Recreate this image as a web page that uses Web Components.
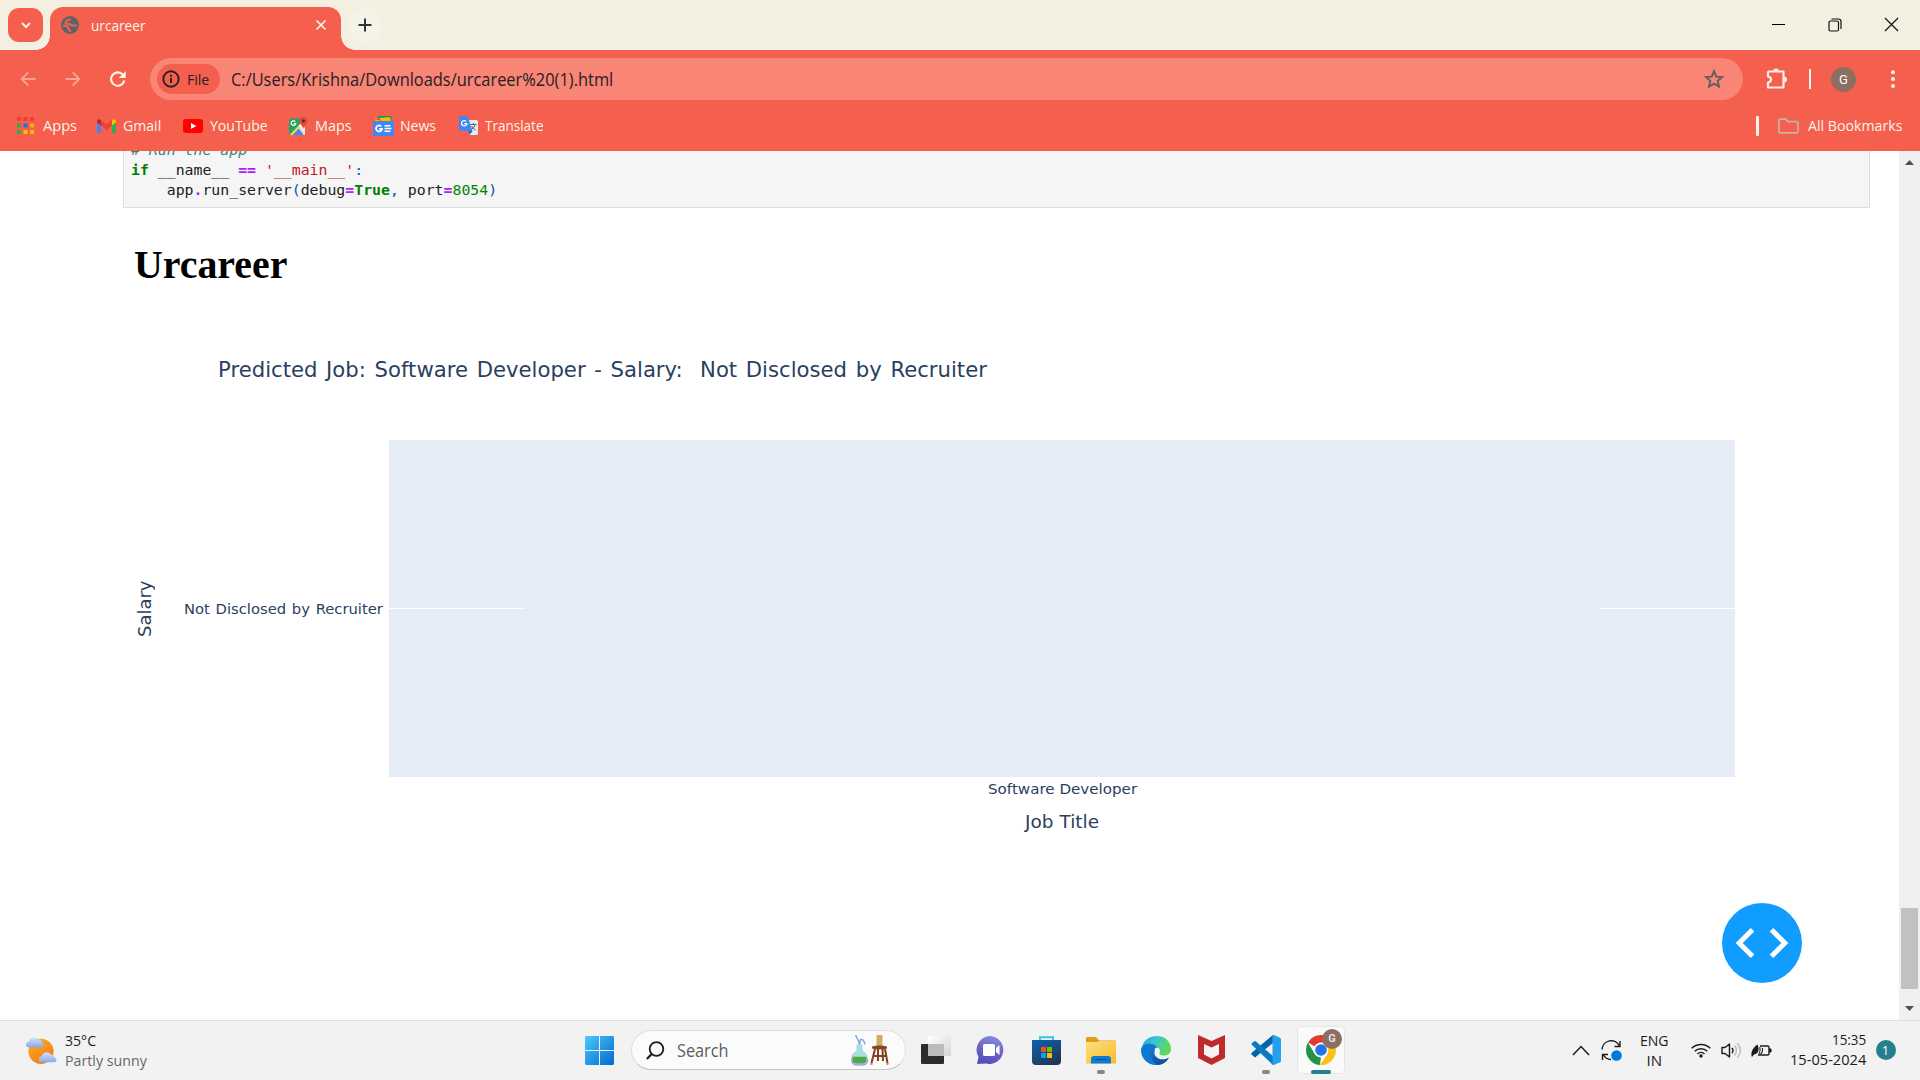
<!DOCTYPE html>
<html lang="en">
<head>
<meta charset="utf-8">
<title>urcareer</title>
<style>
html,body{margin:0;height:100%;overflow:hidden}
body{font-family:"Open Sans","Noto Sans",sans-serif;background:#fff}
</style>
</head>
<body>
<desktop-screen></desktop-screen>
<script>
const ICONS = {
  chevronDown:[12,12,'<path d="M2 4l4 4 4-4" fill="none" stroke="#fbf5e6" stroke-width="2"/>'],
  globe:[18,18,'<circle cx="9" cy="9" r="9" fill="#5f6368"/><path d="M9.500 3C7 4 5 5 4.500 6.500c0 1.500 1.500 1.500 3 1.500 2.500 0 2.500 1.500 4.500 1.500h4M2 9.500c2 .3 4 .3 5 1.300 1.200 1.200-.2 1.700.8 2.500 1 .7 1.500.7 1.500 2.700" fill="none" stroke="#f55f4e" stroke-width="2"/>'],
  x:[12,12,'<path d="M1.500 1.500l9 9M10.500 1.500l-9 9" stroke="#fbf5e6" stroke-width="1.700"/>'],
  plus:[14,14,'<path d="M7 .5v13M.5 7h13" stroke="#2f3640" stroke-width="2"/>'],
  back:[16,16,'<path d="M15.500 8H2M8.300 1.300L1.600 8l6.700 6.700" fill="none" stroke="#f9a497" stroke-width="1.800"/>'],
  fwd:[16,16,'<path d="M.5 8H14M7.700 1.300L14.400 8l-6.700 6.700" fill="none" stroke="#f9a497" stroke-width="1.800"/>'],
  reload:[18,18,'<path d="M15.300 10.500a6.700 6.700 0 1 1-1.600-6" fill="none" stroke="#fff3e6" stroke-width="2.100"/><path d="M16.800 1v7h-7z" fill="#fff3e6"/>'],
  info:[18,18,'<circle cx="9" cy="9" r="7.700" fill="none" stroke="#272024" stroke-width="1.900"/><path d="M9 8v5" stroke="#272024" stroke-width="2"/><path d="M9 4.700v2" stroke="#272024" stroke-width="2"/>'],
  star:[20,20,'<path d="M10 2.200l2.300 5.400 5.800.5-4.400 3.800 1.300 5.700-5-3-5 3 1.300-5.700-4.400-3.800 5.800-.5z" fill="none" stroke="#5f5d60" stroke-width="1.900"/>'],
  puzzle:[22,22,'<path d="M3 3.500h14.500v16H2v-5q3-.5 3-3T2 8.500V4.500q0-1 1-1z" fill="none" stroke="#fbeee6" stroke-width="2.200" stroke-linejoin="round"/><path d="M7 3.500a3 3 0 0 1 6 0zM18 8.500a3 3 0 0 1 0 6z" fill="#fbeee6"/>'],
  dots:[4,18,'<g fill="#fff3e6"><circle cx="2" cy="2.200" r="2"/><circle cx="2" cy="9" r="2"/><circle cx="2" cy="15.900" r="2"/></g>'],
  folderLine:[21,16,'<path d="M1 13.500V2.500q0-1.300 1.300-1.300H8l2 2.500h8.700q1.300 0 1.300 1.300v8.500q0 1.300-1.300 1.300H2.300Q1 14.800 1 13.500z" fill="none" stroke="#c5b5a6" stroke-width="1.700"/>'],
  apps:[17,17,'<g><path d="M0 0h4v4H0zM6.500 0h4v4h-4zM13 0h4v4h-4z" fill="#f43b30"/><path d="M0 6.500h4v4H0z" fill="#34a853"/><path d="M6.500 6.500h4v4h-4z" fill="#1a73e8"/><path d="M13 6.500h4v4h-4z" fill="#fbab05"/><path d="M0 13h4v4H0z" fill="#34a853"/><path d="M6.500 13h4v4h-4zM13 13h4v4h-4z" fill="#fbbc04"/></g>'],
  gmail:[19,14,'<path d="M0 2v10.500Q0 14 1.500 14H4V4z" fill="#4285f4"/><path d="M19 2v10.500Q19 14 17.500 14H15V4z" fill="#34a853"/><path d="M4 1l5.500 4.300L15 1v5.500L9.500 11 4 6.500z" fill="#ea4335"/><path d="M0 2.500Q0 .2 2 .2L4 1v5.500L0 3.500z" fill="#c5221f"/><path d="M19 2.500Q19 .2 17 .2L15 1v5.500l4-3z" fill="#fbbc04"/>'],
  youtube:[20,14,'<rect width="20" height="14" rx="3" fill="#f00"/><path d="M8 4l5.300 3L8 10z" fill="#fff"/>'],
  maps:[20,20,'<path d="M0 4q0-1.500 1.500-1.500H14L9.500 10 1.500 19Q0 19 0 17.500z" fill="#23a566"/><path d="M9.500 10l6.500 9h-1.500L9 12z" fill="#e8eaed"/><path d="M2 19l7-7.500 5.500 7.500z" fill="#4285f4"/><path d="M1 18.500L12 7l1.500 2L3 19.500z" fill="#fbd04b"/><path d="M9.500 10L12 7.500l4 4.500v7z" fill="#f1f1f1"/><path d="M14 13C13.500 9 10.500 8 10.500 5a4 4 0 0 1 8 0C18.500 8 15 9 14 13z" fill="#dd4b3e"/><circle cx="14.500" cy="5" r="1.400" fill="#811411"/><path d="M6.300 5.600A2.300 2.300 0 1 0 6.800 7.500H4.700" fill="none" stroke="#fff" stroke-width="1.200"/>'],
  news:[21,20,'<path d="M5 0h13.500v8H5z" fill="#0c9d58"/><path d="M2 2.500l15-1.500L18.500 8 3 10z" fill="#fbbc04"/><path d="M1.500 3l4-1 3.500 3z" fill="#ea4335"/><rect y="5" width="21" height="15" rx="1" fill="#4285f4"/><path d="M8.300 10.500A3 3 0 1 0 9 12.800H6.200" fill="none" stroke="#fff" stroke-width="1.800"/><path d="M11.500 9.700h6M11.500 12.500h7M11.500 15.300h6" stroke="#fff" stroke-width="1.600"/>'],
  translate:[19,19,'<path d="M8 4h9.500Q19 4 19 5.500v12q0 1.500-1.500 1.500H11z" fill="#e8eaed"/><path d="M1.500 0h7l5 15H1.500Q0 15 0 13.500v-12Q0 0 1.500 0z" fill="#4285f4"/><path d="M9 15h4.500L11 18.500z" fill="#1967d2"/><path d="M7.200 5.400A2.700 2.700 0 1 0 7.900 7.600H5.400" fill="none" stroke="#fff" stroke-width="1.300"/><path d="M11.500 8.500h6M14.300 7v1.500M16.300 8.500q-.8 3.500-4 5M12.700 10q1.500 3 4 4" fill="none" stroke="#5f6368" stroke-width="1"/>'],
  min:[13,13,'<path d="M0 6.500h13" stroke="#000" stroke-width="1"/>'],
  restore:[14,14,'<rect x="1" y="3" width="9.500" height="10" rx="1.500" fill="none" stroke="#111" stroke-width="1.200"/><path d="M3.500 1h7Q13 1 13 3.500V11" fill="none" stroke="#111" stroke-width="1.200"/>'],
  close:[13,13,'<path d="M0 0l13 13M13 0L0 13" stroke="#111" stroke-width="1.200"/>'],
  up:[9,5,'<path d="M0 5l4.500-5L9 5z" fill="#505050"/>'],
  down:[9,5,'<path d="M0 0l4.500 5L9 0z" fill="#505050"/>'],
  code:[80,80,'<circle cx="40" cy="40" r="40" fill="#119dff"/><path d="M30.500 26.700L17.200 40l13.300 13.300M49.500 26.700L62.800 40 49.500 53.300" fill="none" stroke="#fff" stroke-width="5"/>'],
  weather:[30,29,'<defs><linearGradient id="s" x2=".6" y2="1"><stop stop-color="#f4b32a"/><stop offset="1" stop-color="#f67b18"/></linearGradient><linearGradient id="c" x2="0" y2="1"><stop stop-color="#d4e3fb"/><stop offset="1" stop-color="#85a9e8"/></linearGradient></defs><circle cx="15" cy="15.300" r="12.600" fill="url(#s)"/><path d="M3 11.300A2.900 2.900 0 0 1 3 5.500 5 5 0 0 1 12 3.500a3.800 3.800 0 0 1 4 3.300 2.300 2.300 0 0 1 0 4.500z" fill="url(#c)"/><path d="M3 11.300A2.900 2.900 0 0 1 3 5.500 5 5 0 0 1 12 3.500a3.800 3.800 0 0 1 4 3.300 2.300 2.300 0 0 1 0 4.500z" transform="translate(12.700 15)" fill="url(#c)"/>'],
  win:[29,29,'<defs><linearGradient id="w" gradientUnits="userSpaceOnUse" x1="0" y1="0" x2="29" y2="29"><stop stop-color="#4cc9fb"/><stop offset="1" stop-color="#0069cf"/></linearGradient></defs><path d="M1 0h13v14H0V1zM15 0h13l1 1v13H15zM0 15h14v14H1l-1-1zM15 15h14v13l-1 1H15z" fill="url(#w)"/>'],
  search:[18,19,'<circle cx="10.500" cy="8" r="6.800" fill="none" stroke="#1d1d1d" stroke-width="1.800"/><path d="M5.700 13L.9 18" stroke="#1d1d1d" stroke-width="2.300"/>'],
  decor:[38,32,'<path d="M8.500 16L8 8 4.500 1M8.500 12l1-6.500q3-1 4.500 5" fill="none" stroke="#78a4e8" stroke-width="1.400"/><path d="M5.500 10.500h6v6q5.500 3 5.500 8.500 0 6-5 6H5q-5 0-5-6 0-5.500 5.500-8.500z" fill="#a9dce9"/><path d="M1.500 22.500h14q.8 7-3.500 7H5q-4.500 0-3.500-7z" fill="#4fa64b"/><path d="M1.500 22h14" stroke="#b9e8a4"/><path d="M.7 25q0 6 5 6h6q5 0 5-6" fill="none" stroke="#9aa5ee" stroke-width="1.300"/><path d="M25.500 1h6v11.500h-6z" fill="#d0ab62"/><path d="M21 12.500q7.500-2 15 0v2q-7.500 2-15 0z" fill="#8a421f"/><path d="M24 15l-3.500 14M27 15v12M31.500 15l.5 12M34 15l2.500 14M22.500 22h13" fill="none" stroke="#85411f" stroke-width="2"/><path d="M19.500 30h2M35.500 30h2" stroke="#b4624f" stroke-width="1.600"/>'],
  taskview:[30,29,'<defs><linearGradient id="t" x2="1" y2="1"><stop stop-color="#fff"/><stop offset="1" stop-color="#d4d4d4"/></linearGradient></defs><rect y="8" width="23" height="20" rx="1" fill="#2c2c2c"/><rect x="7" width="23" height="20" rx="1" fill="url(#t)"/><path d="M7 8h16v12H8q-1 0-1-1z" fill="#bbb"/>'],
  chat:[30,29,'<defs><linearGradient id="m" x1=".7" y1="0" x2=".4" y2="1"><stop stop-color="#7f8fe6"/><stop offset=".45" stop-color="#7468c2"/><stop offset="1" stop-color="#524cc0"/></linearGradient></defs><path d="M15 0a14 14 0 1 1-5 27.500L1 28l1.500-7A14 14 0 0 1 15 0z" fill="url(#m)"/><rect x="7" y="8" width="12" height="12" rx="1.500" fill="#fff"/><path d="M20 12l3.500-3v10L20 16z" fill="#fff"/>'],
  store:[29,29,'<defs><linearGradient id="b" x2=".6" y2="1"><stop stop-color="#0864ae"/><stop offset="1" stop-color="#243657"/></linearGradient></defs><path d="M8 6V1.200h13V6" fill="none" stroke="#36c4f4" stroke-width="2"/><path d="M0 4h29v21q0 4-4 4H4q-4 0-4-4z" fill="url(#b)"/><path d="M9 11h5v5H9z" fill="#f25022"/><path d="M15 11h5v5h-5z" fill="#7fba00"/><path d="M9 17h5v5H9z" fill="#00a4ef"/><path d="M15 17h5v5h-5z" fill="#ffb900"/>'],
  explorer:[30,27,'<defs><linearGradient id="e" x2="1" y2="1"><stop stop-color="#ffe083"/><stop offset="1" stop-color="#f7bb27"/></linearGradient></defs><path d="M0 1q0-1 1-1h9l3 3.500h16q1 0 1 1V9H0z" fill="#dca016"/><path d="M0 5h11l3-1h16v22.500H0z" fill="url(#e)"/><path d="M5 26.500V22q0-3 3-3h14q3 0 3 3v4.500z" fill="#0f7bd1"/><path d="M9 22.500h12" stroke="#084f8d"/>'],
  edge:[30,30,'<defs><linearGradient id="g" x2="1" y2=".4"><stop stop-color="#1b9fe0"/><stop offset=".45" stop-color="#36c5d8"/><stop offset="1" stop-color="#61d957"/></linearGradient><linearGradient id="h" x2=".5" y2="1"><stop stop-color="#1479cf"/><stop offset="1" stop-color="#0c4f9a"/></linearGradient></defs><path d="M1 13C2-1 27-5 30 13c.4 6-4 8-8 7.500-4-.4-4-2-3-4 .5-4-5-6-9-5C4 11 1 16 1 16z" fill="url(#g)"/><path d="M0 15C0 8 13 6 17 13c-5-2-8 9 1 12 4 1.500 8 0 10-2-4 6-9 7-13 7C6 30 0 23 0 15z" fill="#0d79d3"/><path d="M12 12c-4 2-4 12 4 18 6 0 9-3 12-7.500-9 5-17-1-14-8z" fill="url(#h)"/>'],
  mcafee:[27,30,'<path d="M0 0l13.500 6L27 0v23l-13.500 7L0 23z" fill="#bf2b2d"/><path d="M6 9l7.500 3.500L21 9v10.500l-7.500 4-7.500-4z" fill="#f4f2f2"/>'],
  vscode:[30,30,'<path d="M22 0v8L4 22.500 1 20q-1.500-1 0-2.500z" fill="#0065a9"/><path d="M1 10q-1-1 0-2l2-1.500q1-.8 2 0L22 21v9z" fill="#087bc4"/><path d="M21.500.3L23 0l6 2.700q1 .5 1 1.500v21.500q0 1-1 1.500L23 30l-1.500-.5z" fill="#25a0ee"/>'],
  chrome:[30,30,'<circle cx="15" cy="15" r="15" fill="#fff"/><path d="M15 15L2 7.500A15 15 0 0 1 28 7.500z" fill="#e33b2e"/><path d="M2 7.500L8.700 19 15 22l-1 8A15 15 0 0 1 2 7.500z" fill="#229342"/><path d="M15 7.500h13A15 15 0 0 1 14 30l7.500-11z" fill="#fbc116"/><circle cx="15" cy="15" r="7.400" fill="#fff"/><circle cx="15" cy="15" r="5.800" fill="#2374e8"/>'],
  caret:[18,11,'<path d="M1 10l8-8.500 8 8.500" fill="none" stroke="#1c1c1c" stroke-width="1.500"/>'],
  sync:[21,21,'<path d="M1 9.500A9.200 9.200 0 0 1 18.500 6M19 1v5.500h-5.500M1.500 20v-5.500H7M2 14.500q3 5 8 5" fill="none" stroke="#1c1c1c" stroke-width="1.400"/><circle cx="15.500" cy="15.500" r="5.300" fill="#0079d8"/>'],
  wifi:[20,16,'<g fill="none" stroke="#1c1c1c" stroke-width="1.500"><path d="M.7 6.300a13.200 13.200 0 0 1 18.600 0M3.700 9.200a9 9 0 0 1 12.600 0M6.500 12a5 5 0 0 1 7 0"/></g><circle cx="10" cy="14" r="1.700" fill="#1c1c1c"/>'],
  volume:[21,17,'<path d="M1 5.500h3L8.500 2v13L4 11.500H1z" fill="none" stroke="#1c1c1c" stroke-width="1.400" stroke-linejoin="round"/><path d="M11 5.800q2 2.700 0 5.400" fill="none" stroke="#1c1c1c" stroke-width="1.400"/><path d="M13.500 3.500q4 5 0 10M16.200 1.200q6.500 7.300 0 14.600" fill="none" stroke="#bdbdbd" stroke-width="1.400"/>'],
  battery:[21,15,'<path d="M9 3h7.500Q18 3 18 4.500v6q0 1.500-1.500 1.500H7" fill="none" stroke="#1c1c1c" stroke-width="1.400"/><path d="M18 5.500h1.500q1 0 1 1v2q0 1-1 1H18z" fill="#1c1c1c"/><path d="M.5 13.500C0 7 2.500 4.500 6.500 1.500 8.500 6 8 11 3 11.500l-1.500 2z" fill="#1c1c1c"/><path d="M8.800 4q1 3.500-.8 7M11.500 5v2q0 3-2 4" fill="none" stroke="#1c1c1c" stroke-width="1.100"/>']
};

/* <ui-icon name> draws one glyph at its natural size */
customElements.define('ui-icon', class extends HTMLElement {
  connectedCallback() {
    if (this.shadowRoot) return;
    const [w, h, body] = ICONS[this.getAttribute('name')];
    this.attachShadow({mode:'open'}).innerHTML =
      `<style>:host{display:block;flex:none;width:${w}px;height:${h}px}svg{display:block;overflow:visible}</style>
       <svg width="${w}" height="${h}" viewBox="0 0 ${w} ${h}">${body}</svg>`;
  }
});

/* <fit-text w size> sets one line of text to an exact measure */
customElements.define('fit-text', class extends HTMLElement {
  connectedCallback() {
    if (this.shadowRoot) return;
    const w = +this.getAttribute('w'), s = +this.getAttribute('size') || 15;
    this.attachShadow({mode:'open'}).innerHTML =
      `<style>:host{display:block;flex:none;width:${w}px;font-size:${s}px;line-height:20px;white-space:pre}
       span{display:inline-block;transform-origin:0 50%}</style><span><slot></slot></span>`;
    const span = this.shadowRoot.querySelector('span');
    span.style.transform = `scaleX(${w / span.offsetWidth})`;
  }
});

const component = (name, html) => {
  const t = document.createElement('template');
  t.innerHTML = html;
  customElements.define(name, class extends HTMLElement {
    connectedCallback() {
      if (!this.shadowRoot) this.attachShadow({mode:'open'}).append(document.importNode(t.content, true));
    }
  });
};

component('tab-strip', `<style>
:host{display:flex;height:50px;background:#f3f0e1}
.menu{width:35px;height:34px;border-radius:11px;background:#f55f4e;margin:8px 0 0 8px;display:grid;place-items:center}
.tab{position:relative;margin:7px 0 0 7px;width:290.500px;height:43px;box-sizing:border-box;background:#f55f4e;border-radius:13px 13px 0 0;display:flex;align-items:center;padding:0 14px 7px 11px;color:#fbf5e6}
.tab::before,.tab::after{content:"";position:absolute;bottom:0;width:14px;height:14px}
.tab::before{left:-14px;background:radial-gradient(circle at 0 0,transparent 13.500px,#f55f4e 14px)}
.tab::after{right:-14px;background:radial-gradient(circle at 100% 0,transparent 13.500px,#f55f4e 14px)}
fit-text{margin-left:11.500px}.x{margin-left:auto}
.new{width:34px;height:34px;border-radius:17px;background:#f5f3e8;margin:8px 0 0 7.500px;display:grid;place-items:center}
.win{margin-left:auto;display:flex;gap:43px;height:49px;align-items:center;padding-right:22.500px}
</style>
<div class="menu"><ui-icon name="chevronDown"></ui-icon></div>
<div class="tab"><ui-icon name="globe"></ui-icon><fit-text w="54.500">urcareer</fit-text><ui-icon class="x" name="x"></ui-icon></div>
<div class="new"><ui-icon name="plus"></ui-icon></div>
<div class="win"><ui-icon name="min"></ui-icon><ui-icon name="restore"></ui-icon><ui-icon name="close"></ui-icon></div>`);

component('tool-bar', `<style>
:host{display:flex;height:58px;align-items:center;background:#f55f4e;padding-left:20px;box-sizing:border-box}
.bar{margin-left:23.500px;width:1593px;height:42px;border-radius:21px;background:#f88575;display:flex;align-items:center;box-sizing:border-box;padding:0 19px 0 7px;color:#272024}
.chip{width:63px;height:30px;border-radius:15px;background:#f55f4e;display:flex;align-items:center;gap:7px;padding-left:5px;box-sizing:border-box}
.chip fit-text{padding-bottom:1px}
.star{margin-left:auto}
i{width:2px;height:20px;background:#fff3e6;margin-left:21px}
.me{width:25px;height:25px;border-radius:50%;background:#8d6e63;margin-left:20px;display:grid;place-items:center;color:#fff;font:13px Roboto,sans-serif}
</style>
<ui-icon name="back"></ui-icon><ui-icon name="fwd" style="margin-left:28.500px"></ui-icon><ui-icon name="reload" style="margin-left:28px"></ui-icon>
<div class="bar"><div class="chip"><ui-icon name="info"></ui-icon><fit-text w="22.500" size="15">File</fit-text></div>
<fit-text w="382.500" size="17.500" style="margin-left:10.500px">C:/Users/Krishna/Downloads/urcareer%20(1).html</fit-text><ui-icon class="star" name="star"></ui-icon></div>
<ui-icon name="puzzle" style="margin-left:23px"></ui-icon><i></i><div class="me">G</div><ui-icon name="dots" style="margin-left:34.500px"></ui-icon>`);

component('book-mark', `<style>:host{display:flex;align-items:center;flex:none}</style><slot></slot>`);
component('bookmark-bar', `<style>
:host{display:flex;height:43px;align-items:center;background:#f55f4e;color:#fbf5e6;padding:0 18px 8px 17px;box-sizing:border-box}
fit-text{padding-bottom:2px}
i{width:3px;height:20px;border-radius:1px;background:#fff3e6;margin:0 19px 0 auto}
</style>
<book-mark><ui-icon name="apps"></ui-icon><fit-text w="34" style="margin-left:8.500px">Apps</fit-text></book-mark>
<book-mark style="margin-left:20.500px"><ui-icon name="gmail"></ui-icon><fit-text w="38.500" style="margin-left:7px">Gmail</fit-text></book-mark>
<book-mark style="margin-left:21.500px"><ui-icon name="youtube"></ui-icon><fit-text w="58" style="margin-left:6.500px">YouTube</fit-text></book-mark>
<book-mark style="margin-left:21.500px"><ui-icon name="maps"></ui-icon><fit-text w="36.500" style="margin-left:6px">Maps</fit-text></book-mark>
<book-mark style="margin-left:21.500px"><ui-icon name="news"></ui-icon><fit-text w="36.500" style="margin-left:6px">News</fit-text></book-mark>
<book-mark style="margin-left:22.500px"><ui-icon name="translate"></ui-icon><fit-text w="58.500" style="margin-left:7px">Translate</fit-text></book-mark>
<i></i><ui-icon name="folderLine"></ui-icon><fit-text w="94.500" style="margin-left:9px">All Bookmarks</fit-text>`);

component('code-cell', `<style>
:host{display:flex;flex-direction:column;justify-content:flex-end;height:57px;overflow:hidden;box-sizing:border-box;margin:0 29px 0 123px;background:#f5f5f5;border:1px solid #dedede;border-top:0;padding:0 0 7px 7px}
pre{margin:0;font:14.830px/20px "DejaVu Sans Mono",monospace;color:#212121}
.c{color:#408080;font-style:italic}.k{color:#008000;font-weight:700}.o{color:#a2f;font-weight:700}.s{color:#ba2121}.n{color:#080}.p{color:#0055aa}
</style><pre><span class="c"># Run the app</span>
<span class="k">if</span> __name__ <span class="o">==</span> <span class="s">'__main__'</span><span class="p">:</span>
    app<span class="o">.</span>run_server<span class="p">(</span>debug<span class="o">=</span><span class="k">True</span><span class="p">,</span> port<span class="o">=</span><span class="n">8054</span><span class="p">)</span></pre>`);

component('salary-chart', `<style>
:host{display:block;font-family:"DejaVu Sans",Verdana,sans-serif;color:#2a3f5f}
.title{margin:72px 0 0 218px;word-spacing:2px}
.row{display:flex;align-items:center;margin-top:60px;height:337px}
.y{width:20px;height:56px;margin-left:135px;display:flex;align-items:center;justify-content:center}
.y fit-text{transform:rotate(-90deg)}
.tick{margin-left:29px}
.plot{width:1346px;height:337px;background:#e5ecf6;margin-left:6.500px;display:flex;align-items:center;justify-content:space-between}
.plot b{height:1px;width:134px;background:#fff}.plot u{height:1px;flex:1;background:#e9eff8}
.x{display:flex;flex-direction:column;align-items:center;width:1346px;margin-left:389px}
</style>
<fit-text class="title" w="768.500" size="22">Predicted Job: Software Developer - Salary:  Not Disclosed by Recruiter</fit-text>
<div class="row"><div class="y"><fit-text w="56" size="17">Salary</fit-text></div><fit-text class="tick" w="198.500" size="14.500" style="word-spacing:1px">Not Disclosed by Recruiter</fit-text>
<div class="plot"><b></b><u></u><b></b></div></div>
<div class="x"><fit-text w="149" size="14.500" style="margin-top:2px">Software Developer</fit-text><fit-text w="74" size="17" style="margin-top:13px">Job Title</fit-text></div>`);

component('scroll-bar', `<style>
:host{display:flex;flex-direction:column;align-items:center;width:21px;flex:none;background:#f0f0f0;box-sizing:border-box;padding:9px 0}
div{width:17px;height:81px;background:#c1c1c1;margin:auto 0 17px}
</style><ui-icon name="up"></ui-icon><div></div><ui-icon name="down"></ui-icon>`);

component('page-view', `<style>
:host{display:flex;height:869px;background:#fff;position:relative;overflow:hidden}
main{flex:1}
h1{font:bold 40.500px/46px "Liberation Serif",serif;color:#000;margin:34px 0 0 133.500px}
.fab{position:absolute;left:1722px;top:752px}
</style><main><code-cell></code-cell><h1><fit-text w="153.500" size="40.500" style="line-height:46px">Urcareer</fit-text></h1><salary-chart></salary-chart></main>
<ui-icon class="fab" name="code"></ui-icon><scroll-bar></scroll-bar>`);

component('task-bar', `<style>
:host{display:flex;height:60px;box-sizing:border-box;align-items:center;background:#f2f2f2;border-top:1px solid #dedede;color:#1c1c1c;padding:0 0 1px 26px}
.col{display:flex;flex-direction:column;padding-bottom:1px}
.pill{width:275px;height:40px;box-sizing:border-box;border:1px solid #dfdfdf;border-bottom-color:#c4c4c4;border-radius:20px;background:#fbfbfb;margin-left:17px;display:flex;align-items:center;padding:0 16px 0 14px}
.app{position:relative;width:48px;height:48px;display:grid;place-items:center;border-radius:5px;box-sizing:border-box;margin-left:7px}
.app.run::after{content:"";position:absolute;bottom:0;left:20px;width:8px;height:4px;border-radius:2px;background:#868686}
.app.on{background:#fafafa;border:1px solid #e6e6e6}
.app.on::after{left:13px;width:20px;background:#24808c;bottom:-1px}
.app em{position:absolute;right:2px;top:2px;width:20px;height:20px;border-radius:50%;background:#8d6e63;color:#e8dedb;font:bold 11px/20px Roboto,sans-serif;text-align:center}
.num{width:20px;height:20px;border-radius:50%;background:#24808c;color:#fff;font-size:13px;line-height:20px;text-align:center;margin-left:10px}
</style>
<ui-icon name="weather"></ui-icon>
<div class="col" style="margin-left:9px"><fit-text w="31">35°C</fit-text><fit-text w="81.500" style="color:#666">Partly sunny</fit-text></div>
<ui-icon name="win" style="margin-left:438.500px"></ui-icon>
<div class="pill"><ui-icon name="search"></ui-icon><fit-text w="51" size="17.500" style="margin-left:13px;color:#5d5d5d">Search</fit-text><ui-icon name="decor" style="margin-left:auto"></ui-icon></div>
<div class="app" style="margin-left:6px"><ui-icon name="taskview"></ui-icon></div>
<div class="app"><ui-icon name="chat"></ui-icon></div>
<div class="app"><ui-icon name="store"></ui-icon></div>
<div class="app run"><ui-icon name="explorer"></ui-icon></div>
<div class="app"><ui-icon name="edge"></ui-icon></div>
<div class="app"><ui-icon name="mcafee"></ui-icon></div>
<div class="app run"><ui-icon name="vscode"></ui-icon></div>
<div class="app run on"><ui-icon name="chrome"></ui-icon><em>G</em></div>
<ui-icon name="caret" style="margin-left:227px"></ui-icon>
<ui-icon name="sync" style="margin-left:11px"></ui-icon>
<div class="col" style="margin-left:17.500px;align-items:center"><fit-text w="29">ENG</fit-text><fit-text w="15">IN</fit-text></div>
<ui-icon name="wifi" style="margin-left:22.500px"></ui-icon><ui-icon name="volume" style="margin-left:10px"></ui-icon><ui-icon name="battery" style="margin-left:9px"></ui-icon>
<div class="col" style="margin-left:17.500px;align-items:flex-end;padding-bottom:2px"><fit-text w="34">15:35</fit-text><fit-text w="76">15-05-2024</fit-text></div>
<div class="num">1</div>`);

component('desktop-screen', `<style>:host{display:flex;flex-direction:column;width:1920px;height:1080px;overflow:hidden}</style>
<tab-strip></tab-strip><tool-bar></tool-bar><bookmark-bar></bookmark-bar><page-view></page-view><task-bar></task-bar>`);
</script>
</body>
</html>
